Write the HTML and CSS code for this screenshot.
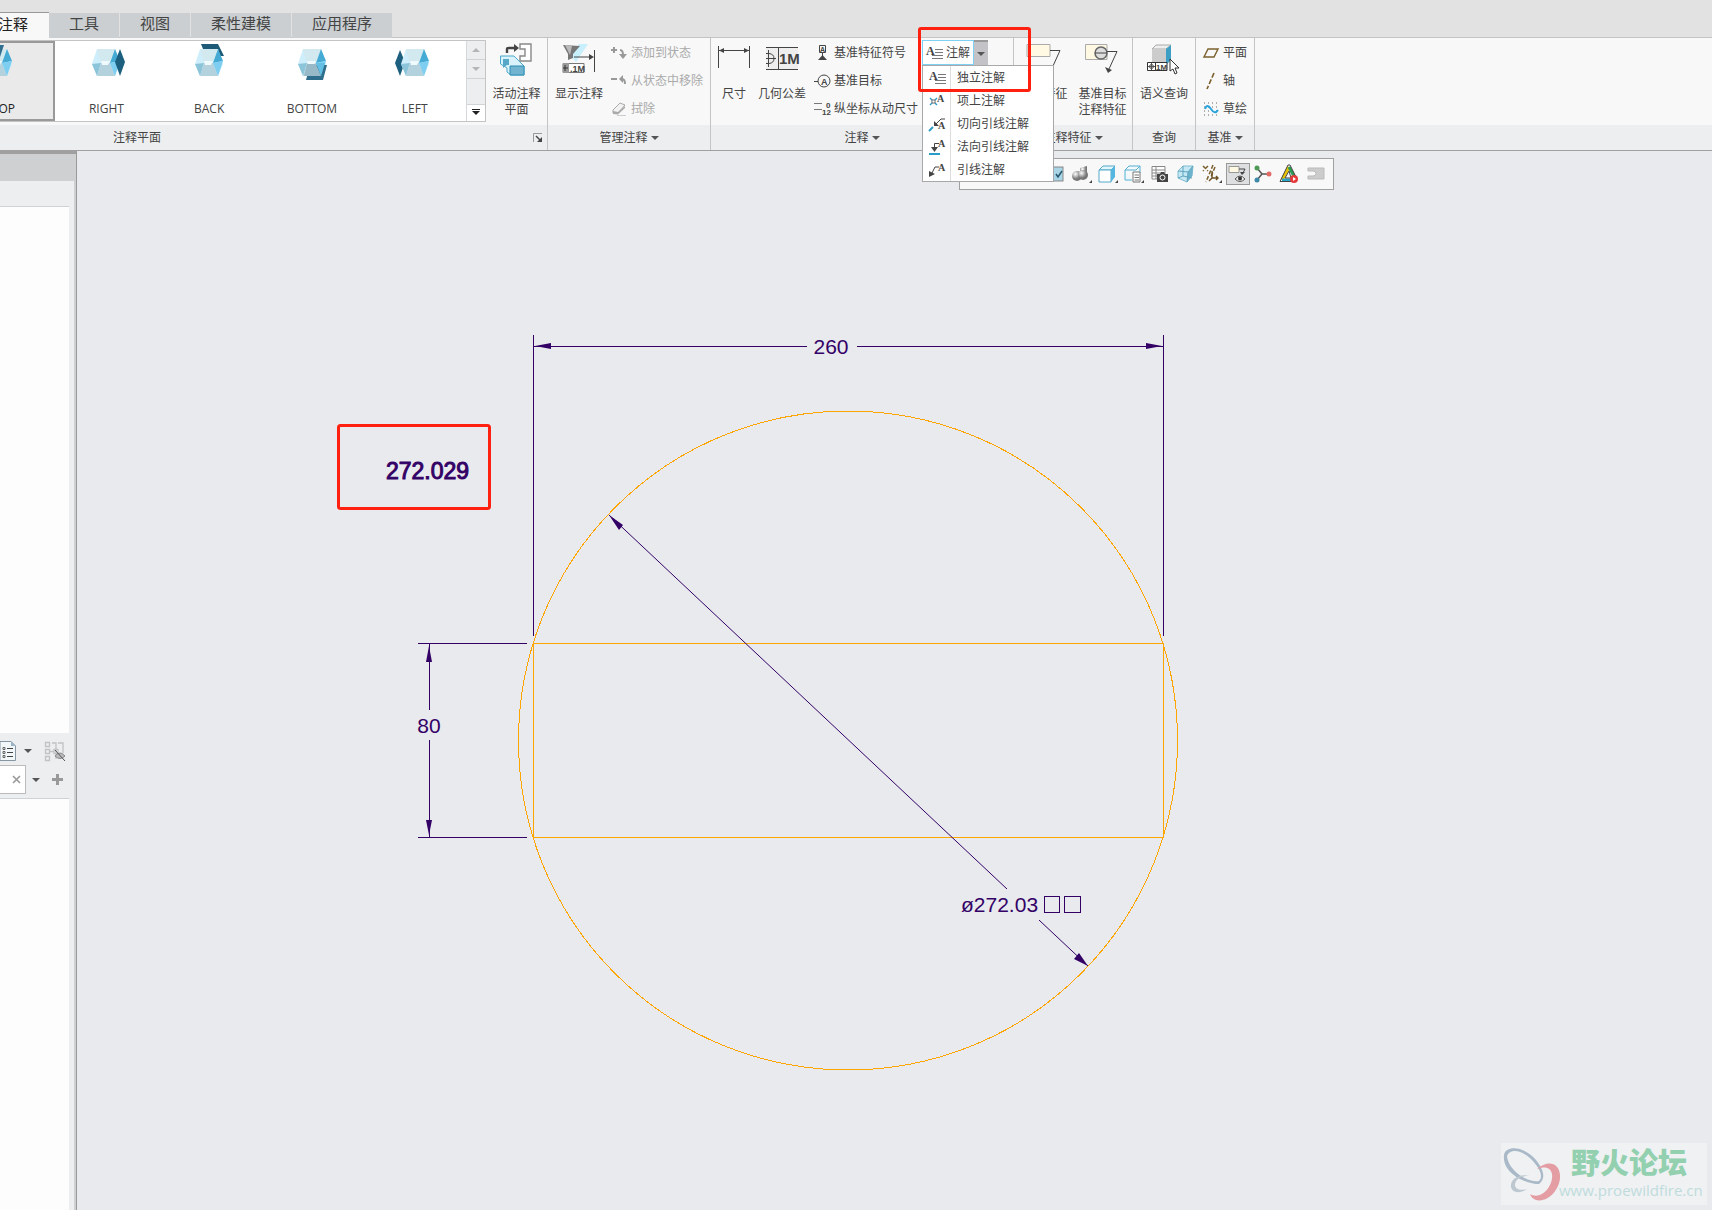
FILE: index.html
```
<!DOCTYPE html>
<html lang="zh-CN">
<head>
    <meta charset="UTF-8">
    <meta name="viewport" content="width=device-width, initial-scale=1.0">
    <title>注释</title>
    <link rel="stylesheet" href="styles.css">
</head>
<body>
    <!-- 公用图形 -->
    <svg class="defs" width="0" height="0" aria-hidden="true">
        <symbol id="cube" viewBox="0 0 28 27">
            <path d="M5 0H23L28 15L23 27H5L0 15Z" fill="#cdeefa"/>
            <path d="M5 0H23L18 14H9Z" fill="#d3e9f0"/>
            <path d="M0 15L9 14L5 27Z" fill="#8cc4da"/>
            <path d="M9 14H18L23 27H5Z" fill="#b4d2de"/>
            <path d="M23 0L28 12L18 14Z" fill="#45aad4"/>
            <path d="M18 14L28 12L23 27Z" fill="#7dcef0"/>
            <path d="M9 12H18L16 16H10Z" fill="#f0fafd"/>
        </symbol>
        <symbol id="lines" viewBox="0 0 17 16">
            <path d="M9 4.5H17M9 7.5H17M6 10.5H17M6 13.5H17" stroke="#777"/>
        </symbol>
    </svg>

    <header class="titlebar"></header>
    <nav class="tabs">
        <button class="tab active">注释</button>
        <button class="tab">工具</button>
        <button class="tab">视图</button>
        <button class="tab">柔性建模</button>
        <button class="tab">应用程序</button>
    </nav>

    <div class="ribbon">
        <section class="group g-plane">
            <div class="tools">
                <div class="gallery">
                    <button class="view top">
                        <svg width="36" height="36" viewBox="0 0 36 36"><use href="#cube" x="5" y="6" width="28" height="27"/><path d="M8 2H25L20 17H4Z" fill="#33708f"/></svg>
                        TOP
                    </button>
                    <button class="view">
                        <svg width="36" height="36" viewBox="0 0 36 36"><use href="#cube" x="4" y="6" width="28" height="27"/><path d="M32 6L37 19L32 33L27 19Z" fill="#1d5f7e"/></svg>
                        RIGHT
                    </button>
                    <button class="view">
                        <svg width="36" height="36" viewBox="0 0 36 36"><path d="M10 1H27L33 13H29L25 6H12Z" fill="#1c5a78"/><use href="#cube" x="4" y="6" width="28" height="27"/></svg>
                        BACK
                    </button>
                    <button class="view">
                        <svg width="36" height="36" viewBox="0 0 36 36"><use href="#cube" x="4" y="6" width="28" height="27"/><path d="M16 22H33L29 37H12Z" fill="#2f6e8d"/><path d="M13 21H22L27 33H10Z" fill="#98bac8"/><path d="M22 20L31 20L27 33Z" fill="#64bfe4"/></svg>
                        BOTTOM
                    </button>
                    <button class="view">
                        <svg width="36" height="36" viewBox="0 0 36 36"><path d="M3 7L8 19L3 33L-2 20Z" fill="#1d5f7e"/><use href="#cube" x="4" y="6" width="28" height="27"/></svg>
                        LEFT
                    </button>
                    <div class="scroller">
                        <button aria-label="向上"><i class="caret up"></i></button>
                        <button aria-label="向下"><i class="caret pale"></i></button>
                        <span></span>
                        <button class="more" aria-label="更多"><i class="caret dark"></i></button>
                    </div>
                </div>
                <button class="big active-plane">
                    <svg width="34" height="34" viewBox="1 0 34 34">
                        <path d="M21 2H32V19H21V14H26V7H21Z" fill="#fff" stroke="#888" stroke-width="1.4"/>
                        <path d="M8 11V7Q8 6 10 6H16" fill="none" stroke="#444" stroke-width="2.4"/><path d="M15 2L20 6L15 10Z" fill="#444"/>
                        <path d="M1.500 14H15L25 24V33H12L8 30V26L1.500 22Z" fill="#d9f2fb" stroke="#4ba9cb"/>
                        <path d="M4 17H10V23H8L4 26Z" fill="#57a7c9"/><path d="M11 24H25V33H11Z" fill="#72b3cf" stroke="#2d8fb5"/>
                    </svg>
                    活动注释<br>平面
                </button>
            </div>
            <footer>注释平面
                <svg class="launcher" width="10" height="10" viewBox="0 0 10 10"><path d="M.5 9V.5H9" fill="none" stroke="#999"/><path d="M3 3L7 7" stroke="#444" stroke-width="1.5"/><path d="M9 4V9H4Z" fill="#444"/></svg>
            </footer>
        </section>

        <section class="group g-manage">
            <div class="tools">
                <button class="big">
                    <svg width="34" height="34" viewBox="0 0 34 34">
                        <path d="M9 14L17 2H26L14 20Z" fill="#c8effc"/>
                        <path d="M1 3L18 4L11 12V16L6 18V12Z" fill="#777"/><path d="M3 3L10 4L8 13Z" fill="#bbb"/>
                        <path d="M12 15H30M32.500 8V30" stroke="#444"/><path d="M27 12L32 15L27 18Z" fill="#444"/>
                        <path d="M1 21.500H22V30.500H1Z" fill="#fff" stroke="#777"/><path d="M1 21H7V31H1Z" fill="#999"/>
                        <path d="M3 23V29M1 26H6" fill="none" stroke="#333"/>
                        <text class="glyph" x="8" y="30" font-size="9">.1M</text>
                    </svg>
                    显示注释
                </button>
                <div class="column">
                    <button class="row" disabled><svg width="16" height="16" viewBox="0 0 16 16"><path d="M0 5H6M3 2V8M9 5Q12 5 12 10" fill="none" stroke="#999" stroke-width="2"/><path d="M8 9H16L12 14Z" fill="#999"/></svg>添加到状态</button>
                    <button class="row" disabled><svg width="16" height="16" viewBox="0 0 16 16"><path d="M0 6H6M11 6Q14 6 14 11" fill="none" stroke="#999" stroke-width="2"/><path d="M12 2V10L8 6Z" fill="#999"/></svg>从状态中移除</button>
                    <button class="row" disabled><svg width="16" height="16" viewBox="0 0 16 16"><path d="M2 9L9 2L14 4L7 12L2 12Z" fill="#f2f2f2" stroke="#aaa"/><path d="M2 10L7 11L14 5V7L7 13.500L2 13Z" fill="#aaa"/><path d="M6 14.500H15" stroke="#ccc"/></svg>拭除</button>
                </div>
            </div>
            <footer>管理注释<i class="caret"></i></footer>
        </section>

        <section class="group g-note">
            <div class="tools">
                <button class="big">
                    <svg width="34" height="34" viewBox="0 0 34 34"><path d="M1.500 4V26M32.500 4V26M2 8.500H32" stroke="#444"/><path d="M2 8.500L7 6V11ZM32 8.500L27 6V11Z" fill="#444"/></svg>
                    尺寸
                </button>
                <button class="big wide">
                    <svg width="34" height="34" viewBox="0 0 34 34"><path d="M1 5H33V27H1Z" fill="#eee"/><path d="M1 5.500H33M1 27.500H33M13.500 5V27M3.500 8V25M1 16.500H11M1 11.500H4Q9 12 9 16.500Q9 21 4 21.500H1" fill="none" stroke="#444"/><text class="glyph" x="14" y="22" font-size="15">1M</text></svg>
                    几何公差
                </button>
                <div class="column">
                    <button class="row"><svg width="18" height="16" viewBox="0 0 18 16"><path d="M5.500 .5H11.500V7.500H5.500ZM8.500 7V11" fill="none" stroke="#444"/><text class="glyph" x="6" y="7" font-size="7">A</text><path d="M8.500 10L13 15H4Z" fill="#444"/></svg>基准特征符号</button>
                    <button class="row"><svg width="18" height="16" viewBox="0 0 18 16"><circle cx="10" cy="8" r="6" fill="none" stroke="#444"/><path d="M0 8.500H4" stroke="#444"/><text class="glyph" x="7" y="12" font-size="9">A</text></svg>基准目标</button>
                    <button class="row"><svg width="18" height="16" viewBox="0 0 18 16"><path d="M0 2.500H8M0 8.500H8" stroke="#777"/><text class="glyph" x="12" y="7" font-size="8">0</text><text class="glyph" x="8" y="14" font-size="8">12</text></svg>纵坐标从动尺寸</button>
                </div>
                <div class="split">
                    <button class="split-main"><svg width="17" height="16"><text class="serif" x="0" y="10" font-size="12">A</text><use href="#lines"/></svg>注解</button>
                    <button class="split-arrow" aria-label="展开"><i class="caret"></i></button>
                    <ul class="menu">
                        <li><button><svg width="17" height="16"><text class="serif" x="0" y="10" font-size="12">A</text><use href="#lines"/></svg><span>独立注解</span></button></li>
                        <li><button><svg width="17" height="16"><path d="M1 5L8 12M8 5L1 12" stroke="#2c9cc9" stroke-width="1.400"/><rect x="3" y="7" width="3" height="3" fill="#fff" stroke="#777"/><text class="serif" x="8" y="9" font-size="10">A</text></svg><span>项上注解</span></button></li>
                        <li><button><svg width="17" height="16"><path d="M0 15L4 11" stroke="#2c9cc9" stroke-width="2"/><path d="M6 9L12 3H16" fill="none" stroke="#444"/><path d="M5 5V10H10Z" fill="#444"/><text class="serif" x="9" y="13" font-size="10">A</text></svg><span>切向引线注解</span></button></li>
                        <li><button><svg width="17" height="16"><path d="M0 15H11" stroke="#2c9cc9" stroke-width="2"/><path d="M5.500 10V4.500H10" fill="none" stroke="#444"/><path d="M2 8H9L5.500 13Z" fill="#444"/><text class="serif" x="9" y="8" font-size="10">A</text></svg><span>法向引线注解</span></button></li>
                        <li><button><svg width="17" height="16"><path d="M2 13L6 5H10" fill="none" stroke="#444"/><path d="M0 9V15L6 12Z" fill="#444"/><text class="serif" x="9" y="9" font-size="10">A</text></svg><span>引线注解</span></button></li>
                    </ul>
                    <span class="mark"></span>
                </div>
            </div>
            <footer>注释<i class="caret"></i></footer>
        </section>

        <section class="group g-feature">
            <div class="tools">
                <button class="big">
                    <svg width="34" height="34" viewBox="0 0 34 34"><path d="M0 2.500H23V14.500H0Z" fill="#fff8e3" stroke="#aaa"/><path d="M23 8.500H33L26 24" fill="none" stroke="#444"/></svg>
                    注释特征
                </button>
                <button class="big">
                    <svg width="34" height="34" viewBox="2 0 34 34"><path d="M1.500 2.500H23V17.500H1.500Z" fill="#fff8e3" stroke="#aaa"/><circle cx="17" cy="11" r="6" fill="#ddd" stroke="#666" stroke-width="1.500"/><path d="M11 11H23M23 9.500H33L25 27" fill="none" stroke="#444"/><path d="M21 25L28 28L24 31Z" fill="#444"/></svg>
                    基准目标<br>注释特征
                </button>
            </div>
            <footer>注释特征<i class="caret"></i></footer>
        </section>

        <section class="group g-query">
            <div class="tools">
                <button class="big">
                    <svg width="34" height="34" viewBox="1 0 34 34"><path d="M6 7L10 3H25L20 7Z" fill="#eee" stroke="#aaa"/><path d="M6 7H20V21H6Z" fill="#ccc"/><path d="M20 7L25 3V18L20 23Z" fill="#3d9fc5"/><path d="M1.500 20.500H21V28.500H1.500ZM9.500 20V28" fill="#fff" stroke="#333"/><circle cx="5.500" cy="24.500" r="2" fill="none" stroke="#555"/><path d="M2 24.500H9M5.500 21V28" fill="none" stroke="#555"/><text class="glyph" x="10" y="28" font-size="8">1M</text><path d="M24 17L33 26H29L31 31L29 32L27 27L24 29Z" fill="#fff" stroke="#333"/></svg>
                    语义查询
                </button>
            </div>
            <footer>查询</footer>
        </section>

        <section class="group g-datum">
            <div class="tools">
                <div class="column">
                    <button class="row"><svg width="16" height="16" viewBox="0 0 16 16"><path d="M5 4H15L11 12H1Z" fill="none" stroke="#7a5f2c" stroke-width="1.400"/></svg>平面</button>
                    <button class="row"><svg width="16" height="16" viewBox="0 0 16 16"><path d="M11 0L4 16" stroke="#7a5f2c" stroke-width="1.600" stroke-dasharray="5 2"/></svg>轴</button>
                    <button class="row"><svg width="16" height="16" viewBox="0 0 16 16"><path d="M1 2H15M1 6H15M1 10H15M1 14H15" stroke="#666" stroke-dasharray="1 3"/><path d="M2 8Q4 2 8 8T15 9" fill="none" stroke="#29a4dc" stroke-width="2"/></svg>草绘</button>
                </div>
            </div>
            <footer>基准<i class="caret"></i></footer>
        </section>
        <div class="group rest"><div class="tools"></div><footer></footer></div>
    </div>

    <main class="work">
        <aside class="side">
            <div class="side-head"></div>
            <div class="side-body">
                <div class="blank"></div>
                <div class="list tree"></div>
                <div class="filters">
                    <div class="line">
                        <svg width="16" height="20" viewBox="0 0 16 20"><path d="M0 .5H11L15.500 5V19.500H0Z" fill="#f2f7fa" stroke="#8796a3"/><path d="M11 0V5H16" fill="#9db4c6"/><path d="M7 7.500H13M7 11.500H13M7 15.500H13" stroke="#444"/><path d="M3 6.500H5V8.500H3ZM3 10.500H5V12.500H3ZM3 14.500H5V16.500H3Z" fill="none" stroke="#666"/></svg>
                        <i class="caret"></i>
                        <svg class="tree-icon" width="20" height="20" viewBox="0 0 20 20"><path d="M.5 1.500H4.500V5.500H.5ZM.5 8.500H4.500V12.500H.5ZM.5 15.500H4.500V19.500H.5ZM9 8.500H13V12.500H9ZM5 10.500H9M7 2H11V18M13 2H18V12" fill="none" stroke="#c2c2c2" stroke-width="1.300"/><path d="M10 15Q15 9 20 15Q15 20 10 15Z" fill="#bbb" stroke="#888"/><path d="M10 9L20 20" stroke="#555"/></svg>
                    </div>
                    <div class="line">
                        <span class="search"><input type="text" aria-label="筛选"><svg width="9" height="9"><path d="M1 1L8 8M8 1L1 8" stroke="#999" stroke-width="1.600"/></svg></span>
                        <i class="caret"></i>
                        <svg class="plus" width="11" height="11"><path d="M5.500 0V11M0 5.500H11" stroke="#999" stroke-width="3"/></svg>
                    </div>
                </div>
                <div class="list"></div>
            </div>
        </aside>

        <div class="canvas">
            <div class="viewbar">
                <button><svg width="24" height="20" viewBox="0 0 24 20"><rect x="4" y="3" width="15" height="14" fill="#a9d5e6" stroke="#888"/><path d="M12 10L14 13L18 7" fill="none" stroke="#24566b" stroke-width="1.500"/></svg></button>
                <button><svg width="24" height="20" viewBox="0 0 24 20"><defs><radialGradient id="ball" cx=".35" cy=".3"><stop offset="0" stop-color="#fff"/><stop offset="1" stop-color="#777"/></radialGradient></defs><path d="M10 4L17 2V9L14 13L10 9Z" fill="url(#ball)"/><circle cx="7" cy="12" r="5" fill="url(#ball)"/><circle cx="13" cy="11" r="5" fill="url(#ball)"/><path d="M22 16V19H19Z" fill="#444"/></svg></button>
                <button><svg width="24" height="20" viewBox="0 0 24 20"><path d="M3 6L7 2H19L15 6Z" fill="#e2f6fd" stroke="#55a9c8"/><path d="M3 6H15V18H3Z" fill="#fff" stroke="#55a9c8"/><path d="M15 6L19 2V13L15 18Z" fill="#55b7df"/><path d="M22 16V19H19Z" fill="#444"/></svg></button>
                <button><svg width="24" height="20" viewBox="0 0 24 20"><path d="M3 6L7 2H18V9M3 6V16H10M3 6H14L18 2" fill="#eef9fd" stroke="#55b0d2"/><path d="M11 8H18V18H11Z" fill="#fff" stroke="#777"/><path d="M12.500 11H17M12.500 13.500H17M12.500 16H17" stroke="#777"/><path d="M22 16V19H19Z" fill="#444"/></svg></button>
                <button><svg width="24" height="20" viewBox="0 0 24 20"><path d="M4 2.500H17V15H4ZM4 6H17M4 9H17M4 12H17M8 3V15" fill="#fff" stroke="#888"/><path d="M9 10H12L13 8H16L17 10H20V18H9Z" fill="#444"/><circle cx="14.500" cy="13.500" r="2.500" fill="#444" stroke="#fff"/></svg></button>
                <button><svg width="24" height="20" viewBox="0 0 24 20"><path d="M4 7L9 2H19L18 12L13 18L4 14Z" fill="#c5e8f4" stroke="#7fbcd2"/><path d="M14 8L19 2L18 12L13 18Z" fill="#6db3cd"/><path d="M9 2V12L4 14M9 12L18 14M4 7L14 8L19 2M14 8L13 18" fill="none" stroke="#5ea5bf"/></svg></button>
                <button><svg width="24" height="20" viewBox="0 0 24 20"><path d="M3 2L8 7M8 2L3 7M13 1L6 18M15 3L11 13" fill="none" stroke="#7a5f2c" stroke-width="1.500" stroke-dasharray="4 2"/><path d="M12 7V14H18M12 14L9 17M16 12L18 14L16 16" fill="none" stroke="#6b5122" stroke-width="1.400"/><path d="M22 16V19H19Z" fill="#444"/></svg></button>
                <button class="on"><svg width="22" height="20" viewBox="0 0 22 20"><path d="M2 2.500H12V8.500H2Z" fill="#fff8e3" stroke="#999"/><path d="M12 5H18L16 9" fill="none" stroke="#444"/><path d="M13 8H18L15 11Z" fill="#444"/><path d="M8 15Q13 9 18 15Q13 20 8 15Z" fill="#eee" stroke="#555"/><circle cx="13" cy="14.500" r="2" fill="#333"/></svg></button>
                <button><svg width="24" height="20" viewBox="0 0 24 20"><path d="M5 4L10 10H18M10 10L5 16" fill="none" stroke="#555" stroke-width="1.500"/><circle cx="5" cy="4" r="2.500" fill="#4d9a55"/><circle cx="5" cy="16" r="2.500" fill="#3e88a8"/><circle cx="17" cy="10" r="2.500" fill="#e26a64"/></svg></button>
                <button><svg width="24" height="20" viewBox="0 0 24 20"><path d="M11 3L4 16" stroke="#e8c400" stroke-width="3"/><path d="M11 3L17 14" stroke="#2a9b55" stroke-width="3"/><path d="M4 16H16" stroke="#28a4c8" stroke-width="3"/><path d="M10 1L2 17.500H16M10 1H12L18 13M11 7L7 14H13Z" fill="none" stroke="#444"/><circle cx="16" cy="15" r="4" fill="#e5393b"/><path d="M15 13V17L18 15Z" fill="#fff"/></svg></button>
                <button><svg width="24" height="20" viewBox="0 0 24 20"><path d="M4 4H20V15H4V12H9Q12 12 12 9.500Q12 7 9 7H4Z" fill="#ccc" stroke="#bbb"/></svg></button>
            </div>

            <!-- 图形区 -->
            <svg class="drawing" width="1635" height="1059" viewBox="77 151 1635 1059">
                <g class="geom">
                    <circle cx="848" cy="740.500" r="329.500"/>
                    <path d="M533.500 643.500H1163.500V837.500H533.500Z"/>
                </g>
                <g class="dims">
                    <path d="M533.500 335V636M1163.500 335V636M534 346.500H807M857 346.500H1163"/>
                    <path d="M418 643.500H527M418 837.500H527M429.500 644V710M429.500 740V837"/>
                    <path class="slant" d="M609 515L1007 889M1039 920L1088 966"/>
                </g>
                <g class="heads">
                    <path d="M535 346L551 343V349ZM1162 346L1146 349V343Z"/>
                    <path d="M429 646L432 662H426ZM429 835L432 820H426Z"/>
                    <path d="M609 515L623 525L619 530ZM1088 966L1079 953L1074 959Z"/>
                </g>
                <g class="dim-text">
                    <text x="831" y="354" text-anchor="middle">260</text>
                    <text x="429" y="733" text-anchor="middle">80</text>
                    <text x="961" y="912">ø272.03</text>
                    <text class="result" x="386" y="479">272.029</text>
                </g>
                <path class="missing" d="M1044.500 896.500H1059.500V912.500H1044.500ZM1064.500 896.500H1080.500V912.500H1064.500Z"/>
                <rect class="frame" x="338.500" y="425.500" width="151" height="83" rx="2"/>
            </svg>

            <div class="watermark">
                <svg width="60" height="58" viewBox="0 0 60 58">
                    <path fill="#a9b9c7" fill-rule="evenodd" d="M2 9C4 -1 22 0 34 14C42 24 44 33 37 38C25 38 0 28 2 9ZM5 10C6 24 25 37 37 35C42 30 37 21 29 13C20 4 8 2 5 10Z"/>
                    <path fill="#e39da3" fill-rule="evenodd" d="M35 23C45 14 57 16 58 29C59 43 46 57 34 54C31 53 29 51 28 48C34 52 43 49 48 39C53 29 50 17 35 23Z"/>
                    <path fill="#bcc7d0" d="M29 30C16 27 8 34 9 41C11 48 19 47 25 43C18 45 13 43 13 39C13 33 20 29 29 30Z"/>
                </svg>
                <div class="words"><strong>野火论坛</strong><span>www.proewildfire.cn</span></div>
            </div>
        </div>
    </main>
</body>
</html>
```
FILE: styles.css
```
* { box-sizing: border-box; }
body {
    margin: 0;
    height: 100vh;
    display: flex;
    flex-direction: column;
    overflow: hidden;
    background: #e2e2e2;
    color: #444;
    font: 12px/16px "Open Sans", "Noto Sans CJK SC", sans-serif;
}
button {
    border: 0;
    padding: 0;
    background: none;
    color: inherit;
    font: inherit;
    white-space: nowrap;
}
svg { display: block; flex: none; overflow: visible; }
.defs { position: absolute; }
.glyph { fill: #444; font-family: "Liberation Sans", sans-serif; font-weight: bold; }
.serif { fill: #444; font-family: "Liberation Serif", serif; font-weight: bold; }

/* 标签页 */
.titlebar { height: 12px; flex: none; }
.tabs { display: flex; gap: 1px; height: 26px; flex: none; border-bottom: 1px solid #c4c4c4; }
.tab {
    height: 25px;
    margin-top: 1px;
    padding: 0 20px 4px;
    background: #cbcfd2;
    font-size: 15px;
    line-height: 21px;
}
.tab.active {
    width: 49px;
    height: 26px;
    margin: 0 -1px 0 0;
    padding: 0 21px 3px 0;
    border-top: 1px solid #999;
    background: #f8f8f8;
    color: #222;
    direction: rtl;
}

/* 功能区 */
.ribbon { display: flex; flex: none; height: 113px; background: #f8f8f8; border-bottom: 1px solid #a0a0a0; }
.group { display: flex; flex-direction: column; flex: none; border-right: 1px solid #c4c4c4; }
.tools { display: flex; height: 87px; padding-top: 2px; }
.group footer {
    display: flex;
    align-items: center;
    justify-content: center;
    gap: 3px;
    height: 25px;
    background: #eceef0;
}
.rest { flex: 1; border: 0; }
.g-plane { width: 548px; }
.g-manage { width: 163px; }
.g-note { width: 303px; }
.g-note .column { flex: none; width: 111px; padding-left: 7px; }
.g-feature { width: 119px; }
.g-query { width: 63px; }
.g-datum { width: 59px; }
.g-plane footer { position: relative; justify-content: flex-start; padding-left: 113px; }
.launcher { position: absolute; right: 4px; top: 8px; }

.caret { width: 0; height: 0; border: 4px solid transparent; border-top-color: #555; border-bottom: 0; flex: none; }
.caret.pale { border-top-color: #b5b5b5; }
.caret.up { border-top: 0; border-bottom: 4px solid #b5b5b5; }
.caret.dark { border-top-color: #222; }

.gallery { display: flex; width: 486px; height: 82px; background: #fff; border: 1px solid #c4c4c4; border-left: 0; }
.view { display: flex; flex-direction: column; align-items: center; justify-content: space-between; width: 103px; padding: 2px 0 4px; }
.view.top {
    width: 55px;
    padding: 0 38px 2px 0;
    align-items: flex-start;
    background: #eaeaea;
    border: 2px solid #999;
    border-left: 0;
    color: #222;
    direction: rtl;
}
.scroller { display: flex; flex-direction: column; margin-left: auto; width: 19px; border-left: 1px solid #d5d8da; background: #eceef0; }
.scroller button { display: flex; align-items: center; justify-content: center; height: 19px; border-bottom: 1px solid #d0d3d6; }
.scroller span { flex: 1; }
.scroller .more { height: 17px; border: 0; border-top: 1px solid #d0d3d6; background: #fff; }
.more .caret { position: relative; }
.more .caret::before { content: ""; position: absolute; left: -4px; top: -6px; width: 8px; height: 1px; background: #222; }

.big { align-self: flex-start; width: 62px; padding-top: 2px; line-height: 16px; }
.big svg { margin: 0 auto 10px; }
.active-plane { width: 61px; }
.column { display: flex; flex-direction: column; gap: 6px; padding-top: 2px; }
.row { display: flex; align-items: center; gap: 4px; height: 22px; }
.row:disabled { color: #aaa; }
.g-manage .column { padding-left: 1px; }
.g-note .big { width: 46px; }
.g-note .wide { width: 50px; }
.g-note .row { gap: 2px; }
.g-feature .big { width: 59px; }
.g-datum .column { padding-left: 7px; }

/* 注解下拉 */
.split { position: relative; display: flex; width: 66px; height: 25px; margin-left: 4px; }
.split-main { display: flex; align-items: center; gap: 3px; width: 52px; padding-left: 3px; background: #fff; border: 1px solid #7fd0f5; }
.split-arrow { width: 14px; display: flex; align-items: center; justify-content: center; background: #c3c3c7; border-top: 2px solid #999; }
.menu {
    position: absolute;
    z-index: 3;
    left: 0;
    top: 25px;
    width: 132px;
    margin: 0;
    padding: 0;
    list-style: none;
    background: #fff;
    border: 1px solid #a8a8a8;
}
.menu button { display: flex; align-items: center; width: 100%; height: 23px; padding-left: 6px; }
.menu span { margin-left: 4px; padding-left: 6px; line-height: 23px; border-left: 1px solid #ddd; }
.mark { position: absolute; z-index: 4; left: -4px; top: -13px; width: 113px; height: 65px; border: 3px solid #ff2010; border-radius: 3px; }

/* 左侧面板 */
.work { display: flex; flex: 1; min-height: 0; }
.side { display: flex; flex-direction: column; flex: none; width: 77px; background: #cfd0d1; border-right: 1px solid #999; }
.side-head { height: 30px; border-top: 3px solid #a0a0a0; }
.side-body { display: flex; flex-direction: column; flex: 1; margin-right: 2px; padding-right: 5px; background: #eceef0; }
.blank { height: 25px; }
.list { flex: 1; background: #fdfdfd; border-top: 1px solid #cfd2d5; }
.tree { flex: none; height: 527px; }
.filters { height: 65px; padding-top: 8px; }
.line { display: flex; align-items: center; height: 20px; gap: 8px; }
.line + .line { height: 29px; margin-top: 4px; }
.tree-icon { margin-left: 5px; }
.plus { margin-left: 4px; }
.search { display: flex; align-items: center; width: 26px; height: 29px; background: #fff; border: 1px solid #bbb; border-left: 0; }
.search + .caret { margin-left: -2px; }
.search input { width: 12px; border: 0; padding: 0; background: none; }

/* 图形区 */
.canvas { position: relative; flex: 1; overflow: hidden; background: #e8eaee; }
.drawing { position: absolute; left: 0; top: 0; }
.viewbar {
    position: absolute;
    z-index: 1;
    left: 882px;
    top: 7px;
    display: flex;
    align-items: center;
    justify-content: flex-end;
    gap: 2px;
    width: 375px;
    height: 32px;
    padding-right: 5px;
    background: #f8f8f8;
    border: 1px solid #a0a0a0;
}
.viewbar .on { background: #dedfe1; border: 1px solid #999; }
.geom { fill: none; stroke: #ffa500; shape-rendering: crispEdges; }
.dims, .missing { fill: none; stroke: #330066; shape-rendering: crispEdges; }
.slant { shape-rendering: geometricPrecision; }
.heads, .dim-text { fill: #330066; }
.dim-text { font: 21px "Liberation Sans", sans-serif; }
.result { font-size: 23px; stroke: #330066; stroke-width: 1px; }
.frame { fill: none; stroke: #ff2010; stroke-width: 3px; }

.watermark { position: absolute; right: 5px; bottom: 5px; display: flex; width: 206px; height: 62px; padding: 3px 0 0 1px; background: #eff1f3; }
.words { display: flex; flex-direction: column; margin-left: -3px; }
.words strong { padding-left: 12px; color: #93d0af; font-size: 29px; font-weight: 900; line-height: 34px; }
.words span { color: #bfdcdc; font-size: 15px; line-height: 20px; }
```
